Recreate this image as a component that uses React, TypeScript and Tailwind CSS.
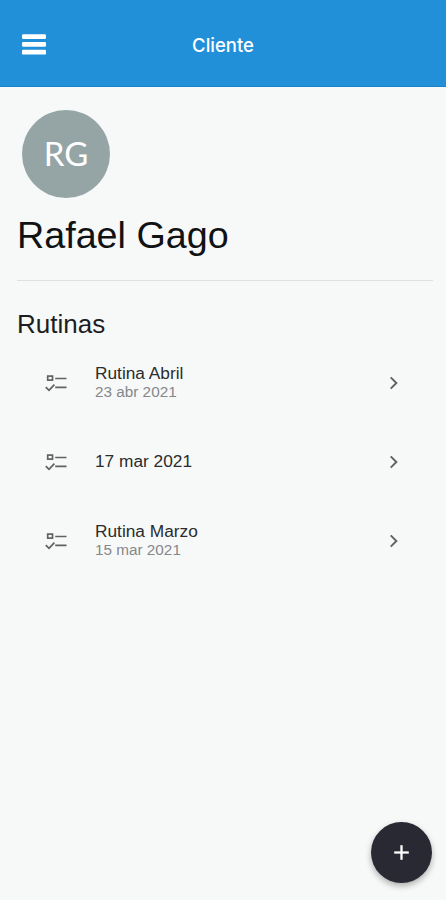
import { Plus } from "lucide-react";

type Routine = {
  title?: string;
  date: string;
};

const ROUTINES: Routine[] = [
  { title: "Rutina Abril", date: "23 abr 2021" },
  { date: "17 mar 2021" },
  { title: "Rutina Marzo", date: "15 mar 2021" },
];

function MenuIcon() {
  return (
    <svg width="24" height="21" viewBox="0 0 24 21" fill="currentColor">
      <rect y="0.2" width="24" height="4.8" rx="1.2" />
      <rect y="8" width="24" height="4.8" rx="1.2" />
      <rect y="15.8" width="24" height="4.8" rx="1.2" />
    </svg>
  );
}

function ChecklistIcon() {
  return (
    <svg width="22" height="18" viewBox="0 0 22 18" fill="none" stroke="currentColor" strokeWidth="1.7">
      <rect x="2.7" y="2.1" width="4.8" height="4" />
      <path d="M10.2 4.5H21.5M10.2 13.4H21.5" />
      <path d="M0.8 13.2L4 16.4L9.4 10.6" />
    </svg>
  );
}

function ChevronIcon() {
  return (
    <svg width="10" height="14" viewBox="0 0 10 14" fill="none" stroke="currentColor" strokeWidth="1.9">
      <path d="M1.7 1.3L7.4 7L1.7 12.7" />
    </svg>
  );
}

function RoutineRow({ title, date }: Routine) {
  return (
    <li className="flex h-[79px] items-center pl-[45px] pr-[47px] text-[#5f6163]">
      <ChecklistIcon />
      <div className="ml-[28px] flex-1">
        <div className="text-[17.3px] leading-[19px] text-[#2b2c2d]">{title ?? date}</div>
        {title && <div className="text-[15.3px] leading-[18px] text-[#85878a]">{date}</div>}
      </div>
      <ChevronIcon />
    </li>
  );
}

export default function App() {
  return (
    <div className="relative h-[900px] w-full overflow-hidden bg-[#f7f9f9] font-['Liberation_Sans',sans-serif]">
      <header className="grid h-[87px] grid-cols-[1fr_auto_1fr] items-center border-b border-[#1b83c9] bg-[#2190d8] pt-[3px] text-white">
        <button className="ml-[22px] justify-self-start" aria-label="Menu">
          <MenuIcon />
        </button>
        <h1 className="pr-[-2px] font-['Inter',sans-serif] text-[18.5px] font-medium leading-6">Cliente</h1>
      </header>

      {/* Client */}
      <section className="ml-[17px] mr-[13px] h-[194px] border-b border-[#dfe1e1] pt-[23px]">
        <div className="ml-[5px] flex size-[88px] items-center justify-center rounded-full bg-[#95a5a6] font-['Lato',sans-serif] text-[33px] text-white">
          RG
        </div>
        <h2 className="mt-[15px] text-[37.7px] leading-[44px] text-[#111213]">Rafael Gago</h2>
      </section>

      {/* Routines */}
      <h3 className="ml-[17px] mt-[28px] text-[26px] leading-[30px] text-[#1d1e1f]">Rutinas</h3>
      <ul className="mt-[4px]">
        {ROUTINES.map((routine) => (
          <RoutineRow key={routine.date} {...routine} />
        ))}
      </ul>

      <button
        aria-label="Nueva rutina"
        className="absolute bottom-[17px] right-[14px] flex size-[61px] items-center justify-center rounded-full bg-[#282932] text-white shadow-[0_3px_6px_rgba(0,0,0,0.3)]"
      >
        <Plus size={25} strokeWidth={2.2} strokeLinecap="butt" />
      </button>
    </div>
  );
}
